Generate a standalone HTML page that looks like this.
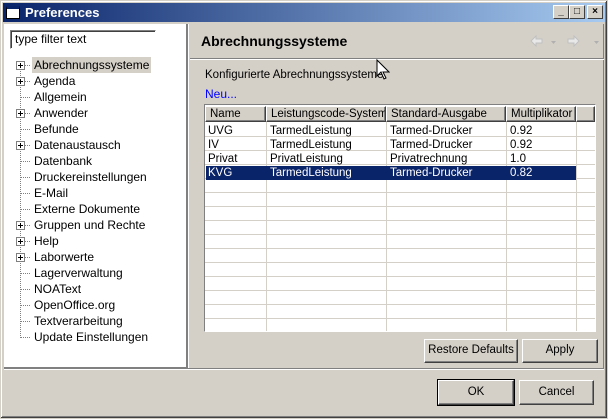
<!DOCTYPE html>
<html><head><style>
*{margin:0;padding:0;box-sizing:border-box}
body{width:608px;height:419px;overflow:hidden;background:#d4d0c8;font-family:"Liberation Sans",sans-serif;font-size:11px;color:#000;position:relative}
.a{position:absolute;white-space:nowrap}
.win{left:0;top:0;width:608px;height:419px;border:1px solid #d4d0c8;box-shadow:inset -1px -1px #404040,inset 1px 1px #fff,inset -2px -2px #808080}
.title{left:3px;top:3px;width:602px;height:19px;background:linear-gradient(90deg,#0a246a,#a6caf0);color:#fff;font-weight:bold;font-size:13px;line-height:19px;padding-left:22px}
.tb{top:5px;width:16px;height:14px;background:#d4d0c8;border:1px solid;border-color:#fff #404040 #404040 #fff;font-size:10px;line-height:12px;text-align:center;color:#000;font-weight:bold}
.btn{background:#d4d0c8;border:1px solid;border-color:#fff #404040 #404040 #fff;box-shadow:inset -1px -1px #808080;text-align:center;font-size:11.5px}
.ti{position:absolute;left:32px;height:16px;line-height:16px;font-size:12px;padding:0 2px;white-space:nowrap}
.cell{position:absolute;height:14px;line-height:14px;padding-left:3px;white-space:nowrap;font-size:11.5px}
.hd{position:absolute;top:106px;height:16px;line-height:15px;padding-left:4px;background:#d4d0c8;border:1px solid;border-color:#fff #404040 #404040 #fff;box-shadow:inset -1px -1px #808080;white-space:nowrap;overflow:hidden;font-size:11.5px}
</style></head><body>
<div class="a win"></div>
<div class="a title">Preferences</div>
<div class="a" style="left:6px;top:6px;width:14px;height:13px;background:#fff;border:1px solid #000;border-top:3px solid #0a246a"></div>
<div class="a tb" style="left:553px">_</div>
<div class="a tb" style="left:569px">□</div>
<div class="a tb" style="left:587px">×</div>

<div class="a" style="left:4px;top:24px;width:183px;height:344px;background:#fff;border-right:1px solid #808080;border-bottom:1px solid #808080"></div>
<div class="a" style="left:10px;top:30px;width:146px;height:19px;border:1px solid;border-color:#808080 #fff #fff #808080;box-shadow:inset 1px 1px #404040;background:#fff;padding:2px 4px;font-size:12px;line-height:13px">type filter text</div>
<div class="a" style="left:20px;top:66px;height:272px;border-left:1px dotted #808080"></div>
<div class="ti" style="top:57px;background:#d4d0c8">Abrechnungssysteme</div>
<div class="ti" style="top:73px">Agenda</div>
<div class="ti" style="top:89px">Allgemein</div>
<div class="ti" style="top:105px">Anwender</div>
<div class="ti" style="top:121px">Befunde</div>
<div class="ti" style="top:137px">Datenaustausch</div>
<div class="ti" style="top:153px">Datenbank</div>
<div class="ti" style="top:169px">Druckereinstellungen</div>
<div class="ti" style="top:185px">E-Mail</div>
<div class="ti" style="top:201px">Externe Dokumente</div>
<div class="ti" style="top:217px">Gruppen und Rechte</div>
<div class="ti" style="top:233px">Help</div>
<div class="ti" style="top:249px">Laborwerte</div>
<div class="ti" style="top:265px">Lagerverwaltung</div>
<div class="ti" style="top:281px">NOAText</div>
<div class="ti" style="top:297px">OpenOffice.org</div>
<div class="ti" style="top:313px">Textverarbeitung</div>
<div class="ti" style="top:329px">Update Einstellungen</div>
<svg class="a" style="left:0;top:0" width="40" height="345">
<g stroke="#808080" stroke-dasharray="1 1">
<line x1="21" y1="65.5" x2="31" y2="65.5"/><line x1="21" y1="81.5" x2="31" y2="81.5"/><line x1="21" y1="97.5" x2="31" y2="97.5"/><line x1="21" y1="113.5" x2="31" y2="113.5"/><line x1="21" y1="129.5" x2="31" y2="129.5"/><line x1="21" y1="145.5" x2="31" y2="145.5"/><line x1="21" y1="161.5" x2="31" y2="161.5"/><line x1="21" y1="177.5" x2="31" y2="177.5"/><line x1="21" y1="193.5" x2="31" y2="193.5"/><line x1="21" y1="209.5" x2="31" y2="209.5"/><line x1="21" y1="225.5" x2="31" y2="225.5"/><line x1="21" y1="241.5" x2="31" y2="241.5"/><line x1="21" y1="257.5" x2="31" y2="257.5"/><line x1="21" y1="273.5" x2="31" y2="273.5"/><line x1="21" y1="289.5" x2="31" y2="289.5"/><line x1="21" y1="305.5" x2="31" y2="305.5"/><line x1="21" y1="321.5" x2="31" y2="321.5"/><line x1="21" y1="337.5" x2="31" y2="337.5"/>
</g>
<g fill="#fff" stroke="#808080">
<rect x="16.5" y="61.5" width="8" height="8"/><rect x="16.5" y="77.5" width="8" height="8"/><rect x="16.5" y="109.5" width="8" height="8"/><rect x="16.5" y="141.5" width="8" height="8"/><rect x="16.5" y="221.5" width="8" height="8"/><rect x="16.5" y="237.5" width="8" height="8"/><rect x="16.5" y="253.5" width="8" height="8"/>
</g>
<g stroke="#000">
<path d="M18 65.5h5M20.5 63v5M18 81.5h5M20.5 79v5M18 113.5h5M20.5 111v5M18 145.5h5M20.5 143v5M18 225.5h5M20.5 223v5M18 241.5h5M20.5 239v5M18 257.5h5M20.5 255v5"/>
</g>
</svg>

<div class="a" style="left:187px;top:24px;width:2px;height:345px;background:#808080;border-right:1px solid #fff"></div>
<div class="a" style="left:189px;top:24px;width:415px;height:345px;border-right:1px solid #808080"></div>
<div class="a" style="left:201px;top:33px;font-weight:bold;font-size:14px">Abrechnungssysteme</div>
<svg class="a" style="left:530px;top:34px" width="70" height="14">
<g fill="#e8e8e8" stroke="#c0c0c0"><path d="M1 7l5-5v3h6v4H6v3z"/><path d="M49 7l-5-5v3h-6v4h6v3z"/></g>
<g fill="#b0b0b0"><path d="M21 7h5l-2.5 3z"/><path d="M64 7h5l-2.5 3z"/></g>
</svg>
<div class="a" style="left:190px;top:58px;width:414px;border-top:1px solid #808080;border-bottom:1px solid #fff"></div>
<div class="a" style="left:205px;top:69px;font-size:11.5px">Konfigurierte Abrechnungssysteme</div>
<svg class="a" style="left:376px;top:59px" width="14" height="22"><path d="M1 1v16l4-4 3 7 2-1-3-6h6z" fill="#fff" stroke="#000"/></svg>
<div class="a" style="left:205px;top:87px;color:#0000ff;font-size:12px">Neu...</div>

<div class="a" style="left:204px;top:104px;width:392px;height:228px;border:1px solid;border-color:#808080 #fff #fff #808080;background:#fff"></div>
<svg class="a" style="left:205px;top:105px" width="390" height="226">
<g stroke="#d4d0c8">
<path d="M0 31.5h390M0 45.5h390M0 59.5h390M0 73.5h390M0 87.5h390M0 101.5h390M0 115.5h390M0 129.5h390M0 143.5h390M0 157.5h390M0 171.5h390M0 185.5h390M0 199.5h390M0 213.5h390"/>
<path d="M61.5 17v209M181.5 17v209M301.5 17v209M371.5 17v209"/>
</g>
</svg>
<div class="hd" style="left:205px;width:61px">Name</div>
<div class="hd" style="left:266px;width:120px">Leistungscode-System</div>
<div class="hd" style="left:386px;width:120px">Standard-Ausgabe</div>
<div class="hd" style="left:506px;width:70px">Multiplikator</div>
<div class="hd" style="left:576px;width:19px"></div>
<div class="a" style="left:206px;top:166px;width:370px;height:14px;background:#0a246a"></div>
<div class="cell" style="left:205px;top:124px">UVG</div><div class="cell" style="left:267px;top:124px">TarmedLeistung</div><div class="cell" style="left:387px;top:124px">Tarmed-Drucker</div><div class="cell" style="left:507px;top:124px">0.92</div>
<div class="cell" style="left:205px;top:138px">IV</div><div class="cell" style="left:267px;top:138px">TarmedLeistung</div><div class="cell" style="left:387px;top:138px">Tarmed-Drucker</div><div class="cell" style="left:507px;top:138px">0.92</div>
<div class="cell" style="left:205px;top:152px">Privat</div><div class="cell" style="left:267px;top:152px">PrivatLeistung</div><div class="cell" style="left:387px;top:152px">Privatrechnung</div><div class="cell" style="left:507px;top:152px">1.0</div>
<div class="cell" style="left:205px;top:166px;color:#fff">KVG</div><div class="cell" style="left:267px;top:166px;color:#fff">TarmedLeistung</div><div class="cell" style="left:387px;top:166px;color:#fff">Tarmed-Drucker</div><div class="cell" style="left:507px;top:166px;color:#fff">0.82</div>

<div class="a btn" style="left:424px;top:339px;width:94px;height:24px;line-height:21px">Restore Defaults</div>
<div class="a btn" style="left:522px;top:339px;width:76px;height:24px;line-height:21px">Apply</div>
<div class="a" style="left:4px;top:368px;width:600px;border-top:1px solid #808080;border-bottom:1px solid #fff"></div>
<div class="a btn" style="left:438px;top:380px;width:76px;height:25px;line-height:22px;outline:1px solid #000">OK</div>
<div class="a btn" style="left:519px;top:380px;width:75px;height:25px;line-height:22px">Cancel</div>
</body></html>
